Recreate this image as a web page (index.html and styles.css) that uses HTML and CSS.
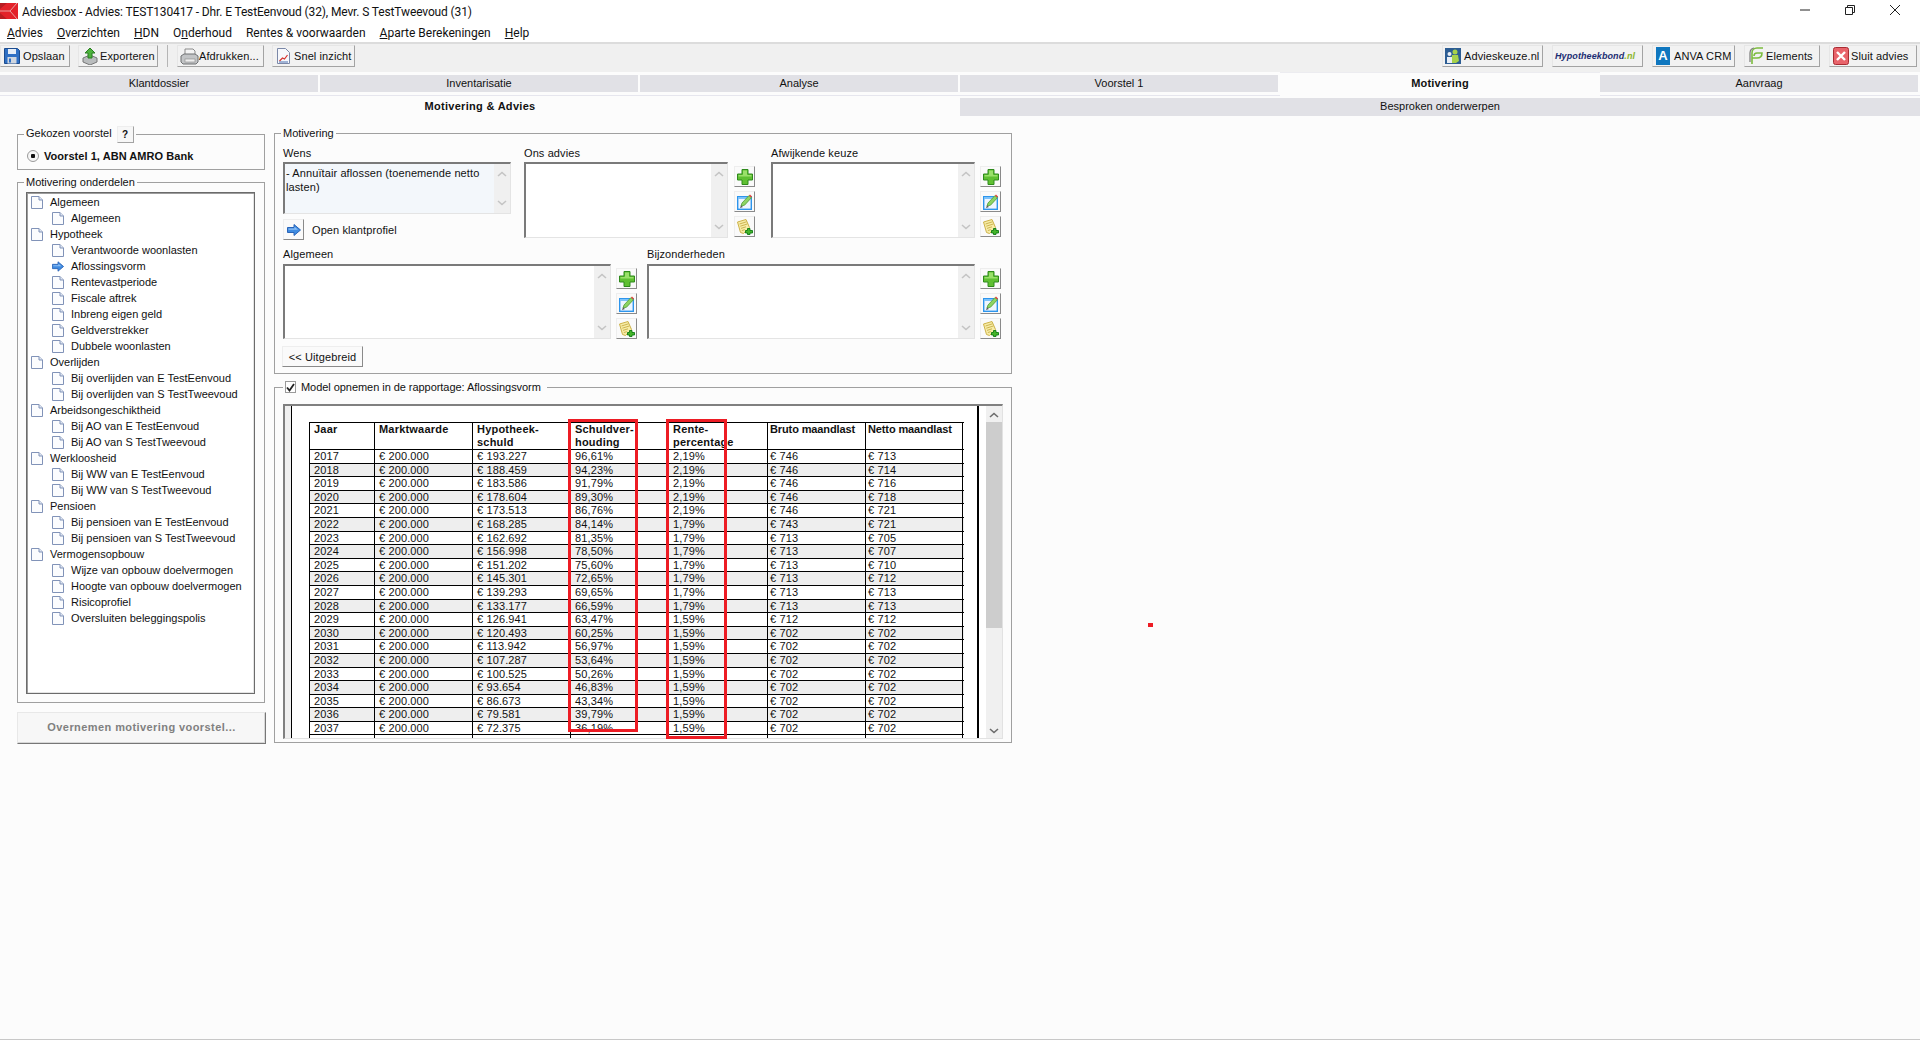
FILE: index.html
```html
<!DOCTYPE html>
<html lang="nl">
<head>
<meta charset="utf-8">
<title>Adviesbox</title>
<link rel="stylesheet" href="styles.css">
</head>
<body>
<svg class="defs" width="0" height="0" aria-hidden="true">
  <symbol id="i-page" viewBox="0 0 12 13"><path d="M.5.5h7.5l3.500 3.500v8.500h-11z" fill="#fbfcfe" stroke="#8193b8"/><path d="M8 .5v3.500h3.500" fill="#dfe6f2" stroke="#8193b8"/></symbol>
  <symbol id="i-arrow" viewBox="0 0 14 12"><path d="M.5 3.500h6.500v-3l6.500 5.500-6.500 5.500v-3h-6.500z" fill="#3f8be0" stroke="#2a64b8"/><path d="M1.500 4.500h6v-1.800l3.500 3h-9.500z" fill="#8ec0f5"/></symbol>
  <symbol id="i-plus" viewBox="0 0 16 16"><path d="M5 .5h6v4.500h4.500v6h-4.500v4.500h-6v-4.500h-4.500v-6h4.500z" fill="#5fc032" stroke="#2f8a1c"/><path d="M6 1.500h4v4.500h4.500v1.500h-13v-1.500h4.500z" fill="#9ae06a"/></symbol>
  <symbol id="i-edit" viewBox="0 0 16 16"><rect x=".7" y="2.700" width="13.600" height="12.600" fill="#eef6ff" stroke="#2d95ec" stroke-width="1.400"/><rect x="1" y="3" width="13" height="2" fill="#7cc2fa"/><path d="M4 12l1-3 7-7.500 2.500 2.200-7 7.500z" fill="#8dd463" stroke="#4f9a33" stroke-width=".8"/><path d="M12 1.500l1-1 2 2-1 1z" fill="#e8433a"/><path d="M3 14l1-2.500 2 1.500z" fill="#555"/></symbol>
  <symbol id="i-note" viewBox="0 0 16 16"><path d="M.5 3l8.500-2.500 3.500 8-6 6-3-1z" fill="#f7eca6" stroke="#cdb24a"/><path d="M2.500 5l7-2.200M3.300 7.200l7-2.200M4 9.400l5-1.600M4.800 11.600l3-1" stroke="#c2a63c" fill="none" stroke-width=".8"/><path d="M10.500 9.500h2.500v2h2.500v2.500h-2.500v1.500h-2.500v-1.500h-2v-2.500h2z" fill="#45b52a" stroke="#0d7a12" stroke-width=".9"/></symbol>
  <symbol id="i-up" viewBox="0 0 10 6"><path d="M1 5l4-3.500 4 3.500" fill="none" stroke="#c4c4c4" stroke-width="1.600"/></symbol>
  <symbol id="i-down" viewBox="0 0 10 6"><path d="M1 1l4 3.500 4-3.500" fill="none" stroke="#c4c4c4" stroke-width="1.600"/></symbol>
</svg>

<header class="titlebar">
  <svg class="logo" viewBox="0 0 18 16" width="18" height="16"><rect width="18" height="16" fill="#e3222a"/><path d="M0 0h7l-7 6zM0 10l7 6h-7z" fill="#b81c22"/><path d="M0 8h10l7-8M10 8l7 8" fill="none" stroke="#e8a0a0" stroke-width="1"/></svg>
  <span class="title-text">Adviesbox - Advies: TEST130417 - Dhr. E TestEenvoud (32), Mevr. S TestTweevoud (31)</span>
  <div class="winctl">
    <svg width="10" height="10" viewBox="0 0 10 10"><path d="M0 5h10" stroke="#222"/></svg>
    <svg width="10" height="10" viewBox="0 0 10 10"><path d="M.5 2.500h7v7h-7zM2.500 2.500v-2h7v7h-2" fill="none" stroke="#222"/></svg>
    <svg width="10" height="10" viewBox="0 0 10 10"><path d="M0 0l10 10M10 0l-10 10" stroke="#222"/></svg>
  </div>
</header>

<nav class="menubar">
  <span><u>A</u>dvies</span><span><u>O</u>verzichten</span><span><u>H</u>DN</span><span>O<u>n</u>derhoud</span><span>Rentes &amp; voorwaarden</span><span><u>A</u>parte Berekeningen</span><span><u>H</u>elp</span>
</nav>

<div class="toolbar">
  <div class="tb-group">
    <button class="tb b-opslaan"><svg width="16" height="16" viewBox="0 0 16 16"><path d="M.5.500h13l2 2v13h-15z" fill="#2e6fc4" stroke="#1d4c8f"/><rect x="4" y="1" width="8" height="5" fill="#e6eef8"/><rect x="3.500" y="9" width="9" height="6.500" fill="#cfd6df"/><rect x="5" y="10.500" width="2" height="4" fill="#2e6fc4"/></svg>Opslaan</button>
    <button class="tb b-export"><svg width="16" height="17" viewBox="0 0 16 17"><path d="M1 10l7-3 7 3v4l-7 3-7-3z" fill="#b9bcbd" stroke="#777"/><path d="M8 0l5 5h-3v5h-4v-5h-3z" fill="#4db33d" stroke="#2b7d22"/></svg>Exporteren</button>
    <span class="tb-sep"></span>
    <button class="tb b-print"><svg width="19" height="17" viewBox="0 0 19 17"><path d="M5 1h8l2 2v5h-10z" fill="#f4f4f4" stroke="#8a8a8a"/><path d="M1 8l3-2h11l3 2v6l-2 2h-13l-2-2z" fill="#c2c4c6" stroke="#6f7173"/><rect x="5" y="11" width="10" height="3" fill="#eee" stroke="#888" stroke-width=".6"/></svg>Afdrukken...</button>
    <button class="tb b-snel"><svg width="13" height="16" viewBox="0 0 13 16"><path d="M.5.500h8l4 4v11h-12z" fill="#f6f8fc" stroke="#7b88a8"/><path d="M2.500 13l3-3 2 1 3-4" fill="none" stroke="#d6332e" stroke-width="1.200"/><path d="M2 14h9" stroke="#4a6fb0"/></svg>Snel inzicht</button>
  </div>
  <div class="tb-group tb-right">
    <button class="tb b-keuze"><svg width="16" height="16" viewBox="0 0 16 16"><rect width="16" height="16" fill="#2d5d93"/><circle cx="10" cy="4" r="2.500" fill="#a7d24a"/><path d="M6 15l1-8h6l1 6-3 2z" fill="#a7d24a"/><circle cx="4.500" cy="6" r="2" fill="#e9eef5"/><path d="M2 15v-6h5v6z" fill="#e9eef5"/></svg>Advieskeuze.nl</button>
    <button class="tb b-bond"><span class="bond">Hypotheekbond<span class="bond-nl">.nl</span></span></button>
    <button class="tb b-anva"><span class="anva-mark">A</span>ANVA CRM</button>
    <button class="tb b-elem"><svg width="15" height="18" viewBox="0 0 15 18"><path d="M3 17V6c0-3 2-5 5-5h6M3 11h5c3 0 5-2 5-5h-5c-2 0-3 1-3 3" fill="none" stroke="#7cbc3e" stroke-width="1.600"/><path d="M1 15V6c0-3 2-5 4-5" fill="none" stroke="#777" stroke-width="1.200"/></svg>Elements</button>
    <button class="tb b-sluit"><svg width="16" height="18" viewBox="0 0 16 18"><rect x=".5" y=".5" width="15" height="17" rx="2" fill="#e8636a" stroke="#a92b32"/><path d="M4 5l8 8M12 5l-8 8" stroke="#fff" stroke-width="2.400"/></svg>Sluit advies</button>
  </div>
</div>

<div class="tabs">
  <div class="tab"><span>Klantdossier</span></div>
  <div class="tab"><span>Inventarisatie</span></div>
  <div class="tab"><span>Analyse</span></div>
  <div class="tab"><span>Voorstel 1</span></div>
  <div class="tab tab-active"><span>Motivering</span></div>
  <div class="tab"><span>Aanvraag</span></div>
</div>
<div class="subtabs">
  <div class="subtab subtab-active">Motivering &amp; Advies</div>
  <div class="subtab">Besproken onderwerpen</div>
</div>

<main class="main">
  <span class="red-dot"></span>
  <aside class="leftcol">
    <fieldset class="fs fs-voorstel">
      <legend class="legend-q">Gekozen voorstel<span class="q-btn">?</span></legend>
      <div class="radio-row"><span class="radio"></span><b>Voorstel 1, ABN AMRO Bank</b></div>
    </fieldset>
    <fieldset class="fs fs-tree">
      <legend>Motivering onderdelen</legend>
      <ul class="tree">
        <li class="l0"><svg class="pg"><use href="#i-page"/></svg>Algemeen</li>
        <li class="l1"><svg class="pg"><use href="#i-page"/></svg>Algemeen</li>
        <li class="l0"><svg class="pg"><use href="#i-page"/></svg>Hypotheek</li>
        <li class="l1"><svg class="pg"><use href="#i-page"/></svg>Verantwoorde woonlasten</li>
        <li class="l1"><svg class="pg"><use href="#i-arrow"/></svg>Aflossingsvorm</li>
        <li class="l1"><svg class="pg"><use href="#i-page"/></svg>Rentevastperiode</li>
        <li class="l1"><svg class="pg"><use href="#i-page"/></svg>Fiscale aftrek</li>
        <li class="l1"><svg class="pg"><use href="#i-page"/></svg>Inbreng eigen geld</li>
        <li class="l1"><svg class="pg"><use href="#i-page"/></svg>Geldverstrekker</li>
        <li class="l1"><svg class="pg"><use href="#i-page"/></svg>Dubbele woonlasten</li>
        <li class="l0"><svg class="pg"><use href="#i-page"/></svg>Overlijden</li>
        <li class="l1"><svg class="pg"><use href="#i-page"/></svg>Bij overlijden van E TestEenvoud</li>
        <li class="l1"><svg class="pg"><use href="#i-page"/></svg>Bij overlijden van S TestTweevoud</li>
        <li class="l0"><svg class="pg"><use href="#i-page"/></svg>Arbeidsongeschiktheid</li>
        <li class="l1"><svg class="pg"><use href="#i-page"/></svg>Bij AO van E TestEenvoud</li>
        <li class="l1"><svg class="pg"><use href="#i-page"/></svg>Bij AO van S TestTweevoud</li>
        <li class="l0"><svg class="pg"><use href="#i-page"/></svg>Werkloosheid</li>
        <li class="l1"><svg class="pg"><use href="#i-page"/></svg>Bij WW van E TestEenvoud</li>
        <li class="l1"><svg class="pg"><use href="#i-page"/></svg>Bij WW van S TestTweevoud</li>
        <li class="l0"><svg class="pg"><use href="#i-page"/></svg>Pensioen</li>
        <li class="l1"><svg class="pg"><use href="#i-page"/></svg>Bij pensioen van E TestEenvoud</li>
        <li class="l1"><svg class="pg"><use href="#i-page"/></svg>Bij pensioen van S TestTweevoud</li>
        <li class="l0"><svg class="pg"><use href="#i-page"/></svg>Vermogensopbouw</li>
        <li class="l1"><svg class="pg"><use href="#i-page"/></svg>Wijze van opbouw doelvermogen</li>
        <li class="l1"><svg class="pg"><use href="#i-page"/></svg>Hoogte van opbouw doelvermogen</li>
        <li class="l1"><svg class="pg"><use href="#i-page"/></svg>Risicoprofiel</li>
        <li class="l1"><svg class="pg"><use href="#i-page"/></svg>Oversluiten beleggingspolis</li>
      </ul>
    </fieldset>
    <button class="btn-overnemen">Overnemen motivering voorstel...</button>
  </aside>

  <section class="rightcol">
    <fieldset class="fs fs-motivering">
      <legend>Motivering</legend>
      <div class="form-row">
        <div class="field f-wens">
          <label>Wens</label>
          <div class="memo memo-wens"><div class="memo-text">- Annuïtair aflossen (toenemende netto lasten)</div><div class="sb"><svg class="chev"><use href="#i-up"/></svg><svg class="chev"><use href="#i-down"/></svg></div></div>
          <div class="link-row"><span class="sq-btn"><svg width="14" height="12"><use href="#i-arrow"/></svg></span>Open klantprofiel</div>
        </div>
        <div class="field f-small">
          <label>Ons advies</label>
          <div class="memo-wrap"><div class="memo memo-tall"><div class="memo-text"></div><div class="sb"><svg class="chev"><use href="#i-up"/></svg><svg class="chev"><use href="#i-down"/></svg></div></div>
          <div class="icon-col"><span class="sq-btn"><svg width="16" height="16"><use href="#i-plus"/></svg></span><span class="sq-btn"><svg width="16" height="16"><use href="#i-edit"/></svg></span><span class="sq-btn"><svg width="16" height="16"><use href="#i-note"/></svg></span></div></div>
        </div>
        <div class="field f-small f-afw">
          <label>Afwijkende keuze</label>
          <div class="memo-wrap"><div class="memo memo-tall"><div class="memo-text"></div><div class="sb"><svg class="chev"><use href="#i-up"/></svg><svg class="chev"><use href="#i-down"/></svg></div></div>
          <div class="icon-col"><span class="sq-btn"><svg width="16" height="16"><use href="#i-plus"/></svg></span><span class="sq-btn"><svg width="16" height="16"><use href="#i-edit"/></svg></span><span class="sq-btn"><svg width="16" height="16"><use href="#i-note"/></svg></span></div></div>
        </div>
      </div>
      <div class="form-row form-row2">
        <div class="field f-wide">
          <label>Algemeen</label>
          <div class="memo-wrap"><div class="memo memo-tall memo-w"><div class="memo-text"></div><div class="sb"><svg class="chev"><use href="#i-up"/></svg><svg class="chev"><use href="#i-down"/></svg></div></div>
          <div class="icon-col"><span class="sq-btn"><svg width="16" height="16"><use href="#i-plus"/></svg></span><span class="sq-btn"><svg width="16" height="16"><use href="#i-edit"/></svg></span><span class="sq-btn"><svg width="16" height="16"><use href="#i-note"/></svg></span></div></div>
        </div>
        <div class="field f-wide">
          <label>Bijzonderheden</label>
          <div class="memo-wrap"><div class="memo memo-tall memo-w"><div class="memo-text"></div><div class="sb"><svg class="chev"><use href="#i-up"/></svg><svg class="chev"><use href="#i-down"/></svg></div></div>
          <div class="icon-col"><span class="sq-btn"><svg width="16" height="16"><use href="#i-plus"/></svg></span><span class="sq-btn"><svg width="16" height="16"><use href="#i-edit"/></svg></span><span class="sq-btn"><svg width="16" height="16"><use href="#i-note"/></svg></span></div></div>
        </div>
      </div>
      <button class="btn-uitgebreid">&lt;&lt; Uitgebreid</button>
    </fieldset>

    <fieldset class="fs fs-model">
      <legend class="legend-check"><span class="check"><svg width="9" height="9" viewBox="0 0 9 9"><path d="M1 4.500l2.500 3 4.500-6.500" fill="none" stroke="#222" stroke-width="1.800"/></svg></span>Model opnemen in de rapportage: Aflossingsvorm</legend>
      <div class="docframe">
        <div class="gutter"></div>
        <div class="page">
          <div class="grid">
            <div class="row head"><div>Jaar</div><div>Marktwaarde</div><div>Hypotheek-<br>schuld</div><div>Schuldver-<br>houding</div><div>Rente-<br>percentage</div><div>Bruto maandlast</div><div>Netto maandlast</div></div>
            <div class="row"><div>2017</div><div>€ 200.000</div><div>€ 193.227</div><div>96,61%</div><div>2,19%</div><div>€ 746</div><div>€ 713</div></div>
            <div class="row alt"><div>2018</div><div>€ 200.000</div><div>€ 188.459</div><div>94,23%</div><div>2,19%</div><div>€ 746</div><div>€ 714</div></div>
            <div class="row"><div>2019</div><div>€ 200.000</div><div>€ 183.586</div><div>91,79%</div><div>2,19%</div><div>€ 746</div><div>€ 716</div></div>
            <div class="row alt"><div>2020</div><div>€ 200.000</div><div>€ 178.604</div><div>89,30%</div><div>2,19%</div><div>€ 746</div><div>€ 718</div></div>
            <div class="row"><div>2021</div><div>€ 200.000</div><div>€ 173.513</div><div>86,76%</div><div>2,19%</div><div>€ 746</div><div>€ 721</div></div>
            <div class="row alt"><div>2022</div><div>€ 200.000</div><div>€ 168.285</div><div>84,14%</div><div>1,79%</div><div>€ 743</div><div>€ 721</div></div>
            <div class="row"><div>2023</div><div>€ 200.000</div><div>€ 162.692</div><div>81,35%</div><div>1,79%</div><div>€ 713</div><div>€ 705</div></div>
            <div class="row alt"><div>2024</div><div>€ 200.000</div><div>€ 156.998</div><div>78,50%</div><div>1,79%</div><div>€ 713</div><div>€ 707</div></div>
            <div class="row"><div>2025</div><div>€ 200.000</div><div>€ 151.202</div><div>75,60%</div><div>1,79%</div><div>€ 713</div><div>€ 710</div></div>
            <div class="row alt"><div>2026</div><div>€ 200.000</div><div>€ 145.301</div><div>72,65%</div><div>1,79%</div><div>€ 713</div><div>€ 712</div></div>
            <div class="row"><div>2027</div><div>€ 200.000</div><div>€ 139.293</div><div>69,65%</div><div>1,79%</div><div>€ 713</div><div>€ 713</div></div>
            <div class="row alt"><div>2028</div><div>€ 200.000</div><div>€ 133.177</div><div>66,59%</div><div>1,79%</div><div>€ 713</div><div>€ 713</div></div>
            <div class="row"><div>2029</div><div>€ 200.000</div><div>€ 126.941</div><div>63,47%</div><div>1,59%</div><div>€ 712</div><div>€ 712</div></div>
            <div class="row alt"><div>2030</div><div>€ 200.000</div><div>€ 120.493</div><div>60,25%</div><div>1,59%</div><div>€ 702</div><div>€ 702</div></div>
            <div class="row"><div>2031</div><div>€ 200.000</div><div>€ 113.942</div><div>56,97%</div><div>1,59%</div><div>€ 702</div><div>€ 702</div></div>
            <div class="row alt"><div>2032</div><div>€ 200.000</div><div>€ 107.287</div><div>53,64%</div><div>1,59%</div><div>€ 702</div><div>€ 702</div></div>
            <div class="row"><div>2033</div><div>€ 200.000</div><div>€ 100.525</div><div>50,26%</div><div>1,59%</div><div>€ 702</div><div>€ 702</div></div>
            <div class="row alt"><div>2034</div><div>€ 200.000</div><div>€ 93.654</div><div>46,83%</div><div>1,59%</div><div>€ 702</div><div>€ 702</div></div>
            <div class="row"><div>2035</div><div>€ 200.000</div><div>€ 86.673</div><div>43,34%</div><div>1,59%</div><div>€ 702</div><div>€ 702</div></div>
            <div class="row alt"><div>2036</div><div>€ 200.000</div><div>€ 79.581</div><div>39,79%</div><div>1,59%</div><div>€ 702</div><div>€ 702</div></div>
            <div class="row"><div>2037</div><div>€ 200.000</div><div>€ 72.375</div><div>36,19%</div><div>1,59%</div><div>€ 702</div><div>€ 702</div></div>
            <div class="row"><div></div><div></div><div></div><div></div><div></div><div></div><div></div></div>
          </div>
        </div>
        <div class="vscroll"><svg class="vs-chev"><use href="#i-up"/></svg><div class="vs-thumb"></div><svg class="vs-chev vs-down"><use href="#i-down"/></svg></div>
        <span class="hl hl-a"></span>
        <span class="hl hl-b"></span>
      </div>
    </fieldset>
  </section>
</main>
</body>
</html>
```

FILE: styles.css
```css
* { box-sizing: border-box; }
html, body { margin: 0; padding: 0; }
body {
  width: 1920px;
  height: 1040px;
  overflow: hidden;
  background: #fcfcfc;
  color: #111;
  font: 11px/14px "Liberation Sans", Arial, sans-serif;
}
.defs { position: absolute; }
button { font: inherit; color: inherit; padding: 0; cursor: default; }

.titlebar {
  height: 24px;
  background: #fff;
  display: flex;
  align-items: center;
  position: relative;
}
.logo { margin: -2px 4px 0 0; flex: none; }
.title-text { font: 12px/16px Roboto, "Noto Sans", sans-serif; letter-spacing: -.13px; color: #111; margin-top: -1px; }
.winctl { margin-left: auto; display: flex; gap: 35px; padding-right: 20px; margin-top: -4px; }

.menubar {
  height: 18px;
  background: #fff;
  display: flex;
  gap: 14px;
  padding-left: 7px;
  font: 12px/18px Roboto, "Noto Sans", sans-serif;
}

.toolbar {
  height: 30px;
  background: #f0f0f0;
  border-top: 2px solid #dcdcdc;
  padding-top: 1px;
  display: flex;
  justify-content: space-between;
  align-items: flex-start;
}
.tb-group { display: flex; align-items: flex-start; gap: 8px; }
.tb-right { gap: 9px; padding-right: 3px; }
.tb {
  height: 22px;
  background: #f2f2f2;
  border: 1px solid;
  border-color: #e6e6e6 #a3a3a3 #a3a3a3 #e6e6e6;
  display: flex;
  align-items: center;
  gap: 3px;
  letter-spacing: .1px;
}
.b-opslaan { width: 70px; padding-left: 3px; }
.b-export { width: 80px; padding-left: 3px; gap: 2px; }
.tb-sep { width: 1px; height: 22px; background: #b5b5b5; margin: 0 1px; }
.b-print { width: 87px; padding-left: 2px; gap: 0; }
.b-snel { width: 83px; padding-left: 4px; gap: 4px; }
.b-keuze { width: 101px; padding-left: 2px; }
.b-bond { width: 91px; padding-left: 2px; }
.b-anva { width: 83px; padding-left: 3px; gap: 4px; }
.b-elem { width: 76px; padding-left: 4px; gap: 2px; }
.b-sluit { width: 88px; padding-left: 3px; gap: 2px; }
.bond { font: italic bold 9px/14px "Liberation Sans", sans-serif; color: #1c2e73; letter-spacing: .1px; }
.bond-nl { color: #8ab62f; }
.anva-mark {
  width: 14px; height: 18px;
  background: #0f77bf; color: #fff;
  font: bold 13px/18px "Liberation Sans", sans-serif;
  text-align: center;
  flex: none;
}

.tabs {
  height: 24px;
  display: grid;
  grid-template-columns: repeat(6, 320px);
  background: #fcfcfc;
}
.tab { height: 21px; margin-top: 3px; border-bottom: 1px solid #e6e6ee; padding-right: 2px; }
.tab span {
  display: block;
  height: 17px;
  line-height: 17px;
  text-align: center;
  background: #e1e1e6;
}
.tab-active { height: 24px; margin-top: 0; border: 0; padding: 0; border-top: 1px solid #ececf0; }
.tab-active span { background: #fcfcfc; font-weight: bold; height: 22px; line-height: 21px; letter-spacing: .2px; }

.subtabs {
  height: 20px;
  padding-top: 2px;
  display: grid;
  grid-template-columns: 960px 960px;
}
.subtab { text-align: center; line-height: 16px; background: #e1e1e6; }
.subtab-active { background: #fcfcfc; font-weight: bold; letter-spacing: .3px; }

.main {
  position: relative;
  height: 924px;
  display: flex;
  align-items: flex-start;
  padding: 10px 0 0 17px;
  border-bottom: 1px solid #c8c8c8;
}
.red-dot { position: absolute; left: 1148px; top: 507px; width: 5px; height: 4px; background: #ed1c24; }

.fs { margin: 0; padding: 0; border: 1px solid #a0a0a0; min-width: 0; display: block; }
legend { padding: 0 2px; margin-left: 6px; line-height: 14px; }

.leftcol { width: 248px; display: flex; flex-direction: column; }
.fs-voorstel { height: 44px; }
.legend-q { display: flex; align-items: flex-start; height: 17px; }
.q-btn {
  width: 17px; height: 17px;
  margin-left: 5px;
  background: #f7f7f7;
  border: 1px solid; border-color: #eee #a3a3a3 #a3a3a3 #eee;
  text-align: center; line-height: 16px; font-weight: bold; font-size: 10px;
}
.radio-row { display: flex; align-items: center; gap: 5px; padding: 6px 0 0 9px; }
.radio-row b { letter-spacing: .05px; }
.radio {
  width: 12px; height: 12px; border-radius: 50%;
  background: radial-gradient(circle, #111 0 2px, #f6f6f6 2.500px);
  border: 1px solid #9a9a9a;
  flex: none;
}
.fs-tree { height: 528px; margin-top: 5px; }
.tree {
  list-style: none;
  margin: 3px 0 0 8px;
  width: 229px;
  height: 502px;
  padding: 1px 0 0 4px;
  background: #fff;
  border: 1px solid #6b6b6b;
  box-shadow: inset 1px 1px 0 #9c9c9c, inset -1px -1px 0 #e4e4e4;
}
.tree li { height: 16px; line-height: 16px; display: flex; align-items: center; white-space: nowrap; }
.pg { width: 12px; height: 13px; flex: none; margin-right: 7px; }
.l1 { padding-left: 21px; }
.btn-overnemen {
  width: 249px; height: 32px;
  margin-top: 9px;
  padding-bottom: 2px;
  background: #f7f7f7;
  border: 1px solid; border-color: #e8e8e8 #777 #777 #e8e8e8;
  box-shadow: inset -1px -1px 0 #d8d8d8;
  color: #808080;
  font-weight: bold;
  letter-spacing: .42px;
}

.rightcol { width: 738px; margin-left: 9px; display: flex; flex-direction: column; }
.fs-motivering { height: 248px; padding: 0 0 0 8px; }
.fs-motivering > legend { margin-left: -2px; }
.form-row { display: flex; margin-top: 6px; height: 92px; }
.form-row2 { margin-top: 9px; gap: 10px; }
.field { display: flex; flex-direction: column; }
.field label { height: 16px; line-height: 14px; letter-spacing: .1px; flex: none; }
.f-wens { width: 228px; margin-right: 13px; }
.f-small { width: 231px; margin-right: 16px; }
.f-afw { margin-right: 0; }
.f-wide { width: 354px; }
.form-row2 label { height: 17px; }
.memo {
  display: flex;
  background: #fff;
  border: 1px solid;
  border-color: #7a7a7a #e4e4e4 #e4e4e4 #7a7a7a;
  border-width: 2px 1px 1px 2px;
}
.memo-wens { height: 52px; background: #f3f7fb; flex: none; }
.memo-tall { width: 204px; height: 76px; flex: none; }
.memo-w { width: 328px; height: 75px; }
.memo-text { flex: 1; padding: 2px 12px 0 1px; line-height: 14px; letter-spacing: .1px; }
.sb {
  width: 16px; background: #f0f0f0; flex: none;
  display: flex; flex-direction: column; justify-content: space-between;
  align-items: center; padding: 7px 0 7px;
}
.chev { width: 10px; height: 6px; display: block; }
.memo-wrap { display: flex; gap: 6px; }
.f-afw .memo-wrap, .form-row2 .memo-wrap { gap: 5px; }
.icon-col { display: flex; flex-direction: column; gap: 4px; padding-top: 4px; }
.sq-btn {
  width: 21px; height: 21px;
  background: #fafafa;
  border: 1px solid; border-color: #eee #8a8a8a #8a8a8a #eee;
  display: flex; align-items: center; justify-content: center;
  flex: none;
}
.link-row { display: flex; align-items: center; gap: 8px; margin-top: 5px; letter-spacing: .1px; flex: none; }
.btn-uitgebreid {
  display: block;
  width: 81px; height: 21px;
  margin: 7px 0 0 -1px;
  background: #fafafa;
  border: 1px solid; border-color: #eee #8a8a8a #8a8a8a #eee;
  letter-spacing: .1px;
}

.fs-model { height: 363px; margin-top: 6px; padding: 0 0 0 8px; }
.legend-check { display: flex; align-items: center; gap: 5px; padding: 0 6px 0 2px; margin-left: 0; letter-spacing: -.05px; }
.check {
  width: 11px; height: 12px; background: #fff; border: 1px solid #9a9a9a;
  display: flex; align-items: center; justify-content: center;
}
.docframe {
  position: relative;
  width: 720px;
  height: 335px;
  margin-top: 10px;
  display: flex;
  border: 1px solid;
  border-width: 2px 1px 1px 2px;
  border-color: #808080 #e2e2e2 #e2e2e2 #808080;
  background: #fff;
}
.gutter { width: 6px; background: #f0f0f0; flex: none; }
.page {
  flex: none;
  width: 688px;
  height: 100%;
  overflow: hidden;
  border-left: 1px solid #000;
  border-right: 2px solid #000;
  padding: 16px 0 0 17px;
  margin-right: 7px;
}
.grid { width: 655px; border-top: 1px solid #000; }
.row {
  display: grid;
  grid-template-columns: 65px 98px 98px 98px 99px 98px 98px;
  height: 13.6px;
  border-bottom: 1px solid #000;
  line-height: 13px;
  letter-spacing: .12px;
}
.row > div { border-left: 1px solid #000; padding-left: 4px; white-space: nowrap; }
.row > div:nth-child(n+6) { padding-left: 2px; }
.row > div:last-child { border-right: 1px solid #000; }
.alt { background: #eeeeee; }
.head { height: 27px; font-weight: bold; letter-spacing: .2px; line-height: 13px; }
.head > div:nth-child(n+6) { letter-spacing: -.12px; }
.vscroll {
  width: 16px; background: #f0f0f0; flex: none;
  display: flex; flex-direction: column; align-items: center;
  position: relative;
  padding-top: 6px;
}
.vs-chev { width: 10px; height: 6px; filter: brightness(.55); flex: none; }
.vs-thumb { width: 16px; height: 206px; background: #cdcdcd; margin-top: 4px; }
.vs-down { margin-top: auto; margin-bottom: 4px; }
.hl { position: absolute; border: 3px solid #ed1c24; pointer-events: none; }
.hl-a { left: 283px; top: 13px; width: 70px; height: 313px; }
.hl-b { left: 381px; top: 13px; width: 61px; height: 320px; }
```
